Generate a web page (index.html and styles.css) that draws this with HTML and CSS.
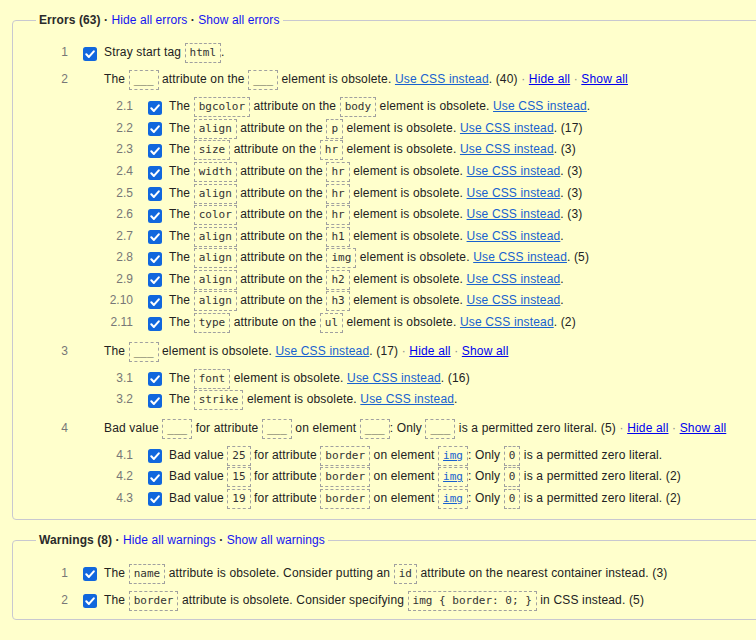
FILE: index.html
```html
<!DOCTYPE html>
<html lang="en">
<head>
<meta charset="utf-8">
<title>Validation results</title>
<link rel="stylesheet" href="styles.css">
</head>
<body>
<svg width="0" height="0" class="defs" aria-hidden="true">
  <defs>
    <symbol id="chk" viewBox="0 0 14 14">
      <rect x="0" y="0" width="14" height="14" rx="2.5" fill="#1167dd"/>
      <path d="M3.3 7.3 L5.9 9.9 L10.8 4.4" fill="none" stroke="#fff" stroke-width="2.1" stroke-linecap="round" stroke-linejoin="round"/>
    </symbol>
  </defs>
</svg>

<fieldset class="box">
  <legend class="box-title"><b>Errors (63) · </b><a href="#" class="hl">Hide all errors</a><b> · </b><a href="#" class="hl">Show all errors</a></legend>
  <ol class="msgs">
    <li class="msg">
      <div class="row"><span class="num">1</span><svg class="cb"><use href="#chk"/></svg><span class="text">Stray start tag <code>html</code>.</span></div>
    </li>
    <li class="msg">
      <div class="row"><span class="num">2</span><span class="cb"></span><span class="text">The <code>___</code> attribute on the <code>___</code> element is obsolete. <a href="#" class="css">Use CSS instead</a>. (40) <span class="sep">·</span> <a href="#" class="ctl">Hide all</a> <span class="sep">·</span> <a href="#" class="ctl">Show all</a></span></div>
      <ol class="sub">
        <li class="row"><span class="num">2.1</span><svg class="cb"><use href="#chk"/></svg><span class="text">The <code>bgcolor</code> attribute on the <code>body</code> element is obsolete. <a href="#" class="css">Use CSS instead</a>.</span></li>
        <li class="row"><span class="num">2.2</span><svg class="cb"><use href="#chk"/></svg><span class="text">The <code>align</code> attribute on the <code>p</code> element is obsolete. <a href="#" class="css">Use CSS instead</a>. (17)</span></li>
        <li class="row"><span class="num">2.3</span><svg class="cb"><use href="#chk"/></svg><span class="text">The <code>size</code> attribute on the <code>hr</code> element is obsolete. <a href="#" class="css">Use CSS instead</a>. (3)</span></li>
        <li class="row"><span class="num">2.4</span><svg class="cb"><use href="#chk"/></svg><span class="text">The <code>width</code> attribute on the <code>hr</code> element is obsolete. <a href="#" class="css">Use CSS instead</a>. (3)</span></li>
        <li class="row"><span class="num">2.5</span><svg class="cb"><use href="#chk"/></svg><span class="text">The <code>align</code> attribute on the <code>hr</code> element is obsolete. <a href="#" class="css">Use CSS instead</a>. (3)</span></li>
        <li class="row"><span class="num">2.6</span><svg class="cb"><use href="#chk"/></svg><span class="text">The <code>color</code> attribute on the <code>hr</code> element is obsolete. <a href="#" class="css">Use CSS instead</a>. (3)</span></li>
        <li class="row"><span class="num">2.7</span><svg class="cb"><use href="#chk"/></svg><span class="text">The <code>align</code> attribute on the <code>h1</code> element is obsolete. <a href="#" class="css">Use CSS instead</a>.</span></li>
        <li class="row"><span class="num">2.8</span><svg class="cb"><use href="#chk"/></svg><span class="text">The <code>align</code> attribute on the <code>img</code> element is obsolete. <a href="#" class="css">Use CSS instead</a>. (5)</span></li>
        <li class="row"><span class="num">2.9</span><svg class="cb"><use href="#chk"/></svg><span class="text">The <code>align</code> attribute on the <code>h2</code> element is obsolete. <a href="#" class="css">Use CSS instead</a>.</span></li>
        <li class="row"><span class="num">2.10</span><svg class="cb"><use href="#chk"/></svg><span class="text">The <code>align</code> attribute on the <code>h3</code> element is obsolete. <a href="#" class="css">Use CSS instead</a>.</span></li>
        <li class="row"><span class="num">2.11</span><svg class="cb"><use href="#chk"/></svg><span class="text">The <code>type</code> attribute on the <code>ul</code> element is obsolete. <a href="#" class="css">Use CSS instead</a>. (2)</span></li>
      </ol>
    </li>
    <li class="msg">
      <div class="row"><span class="num">3</span><span class="cb"></span><span class="text">The <code>___</code> element is obsolete. <a href="#" class="css">Use CSS instead</a>. (17) <span class="sep">·</span> <a href="#" class="ctl">Hide all</a> <span class="sep">·</span> <a href="#" class="ctl">Show all</a></span></div>
      <ol class="sub">
        <li class="row"><span class="num">3.1</span><svg class="cb"><use href="#chk"/></svg><span class="text">The <code>font</code> element is obsolete. <a href="#" class="css">Use CSS instead</a>. (16)</span></li>
        <li class="row"><span class="num">3.2</span><svg class="cb"><use href="#chk"/></svg><span class="text">The <code>strike</code> element is obsolete. <a href="#" class="css">Use CSS instead</a>.</span></li>
      </ol>
    </li>
    <li class="msg">
      <div class="row"><span class="num">4</span><span class="cb"></span><span class="text">Bad value <code>___</code> for attribute <code>___</code> on element <code>___</code>: Only <code>___</code> is a permitted zero literal. (5) <span class="sep">·</span> <a href="#" class="ctl">Hide all</a> <span class="sep">·</span> <a href="#" class="ctl">Show all</a></span></div>
      <ol class="sub">
        <li class="row"><span class="num">4.1</span><svg class="cb"><use href="#chk"/></svg><span class="text">Bad value <code>25</code> for attribute <code>border</code> on element <code><a href="#" class="css">img</a></code>: Only <code>0</code> is a permitted zero literal.</span></li>
        <li class="row"><span class="num">4.2</span><svg class="cb"><use href="#chk"/></svg><span class="text">Bad value <code>15</code> for attribute <code>border</code> on element <code><a href="#" class="css">img</a></code>: Only <code>0</code> is a permitted zero literal. (2)</span></li>
        <li class="row"><span class="num">4.3</span><svg class="cb"><use href="#chk"/></svg><span class="text">Bad value <code>19</code> for attribute <code>border</code> on element <code><a href="#" class="css">img</a></code>: Only <code>0</code> is a permitted zero literal. (2)</span></li>
      </ol>
    </li>
  </ol>
</fieldset>

<fieldset class="box box-warn">
  <legend class="box-title"><b>Warnings (8) · </b><a href="#" class="hl">Hide all warnings</a><b> · </b><a href="#" class="hl">Show all warnings</a></legend>
  <ol class="msgs">
    <li class="msg">
      <div class="row"><span class="num">1</span><svg class="cb"><use href="#chk"/></svg><span class="text">The <code>name</code> attribute is obsolete. Consider putting an <code>id</code> attribute on the nearest container instead. (3)</span></div>
    </li>
    <li class="msg">
      <div class="row"><span class="num">2</span><svg class="cb"><use href="#chk"/></svg><span class="text">The <code>border</code> attribute is obsolete. Consider specifying <code>img { border: 0; }</code> in CSS instead. (5)</span></div>
    </li>
  </ol>
</fieldset>
</body>
</html>
```

FILE: styles.css
```css
html {
  overflow: hidden;
  background: #ffffcc;
}

body {
  margin: 0;
  font-family: "Liberation Sans", Arial, sans-serif;
  font-size: 12px;
  color: #222;
}

.defs {
  position: absolute;
  width: 0;
  height: 0;
}

.box {
  margin: 12.5px 0 0 12px;
  padding: 12px 0 5px 0;
  width: 900px;
  border: 1px solid #c8c8d0;
  border-radius: 4px;
  min-width: 0;
}

.box-warn {
  margin-top: 13.5px;
}

.box-title {
  margin-left: 23px;
  padding: 0 3px;
  line-height: 15px;
  color: #2a2a2a;
  letter-spacing: 0.08px;
}

.box-title b {
  font-weight: bold;
}

.hl {
  color: #1414f0;
  text-decoration: none;
}

.msgs,
.sub {
  list-style: none;
  margin: 0;
  padding: 0;
}

.msg {
  padding: 2.7px 0;
}

.sub {
  margin-left: 65px;
  padding: 5.4px 0 1.5px;
}

.row {
  display: flex;
  align-items: flex-start;
  height: 21.6px;
}

.num {
  flex: none;
  width: 55px;
  margin-right: 15px;
  text-align: right;
  line-height: 21.6px;
  color: #777;
}

.cb {
  flex: none;
  width: 14px;
  height: 14px;
  margin: 4.6px 7px 0 0;
}

.text {
  white-space: nowrap;
  line-height: 21.6px;
  letter-spacing: 0.16px;
}

code {
  display: inline-block;
  font-family: "DejaVu Sans Mono", monospace;
  font-size: 11px;
  line-height: 14px;
  padding: 2px 4px;
  border: 1px dashed #a0a0a0;
  color: #333;
  letter-spacing: 0;
}

.css {
  color: #1862cf;
  text-decoration: underline;
}

.ctl {
  color: #0000ee;
  text-decoration: underline;
}

.sep {
  color: #888;
}
```
